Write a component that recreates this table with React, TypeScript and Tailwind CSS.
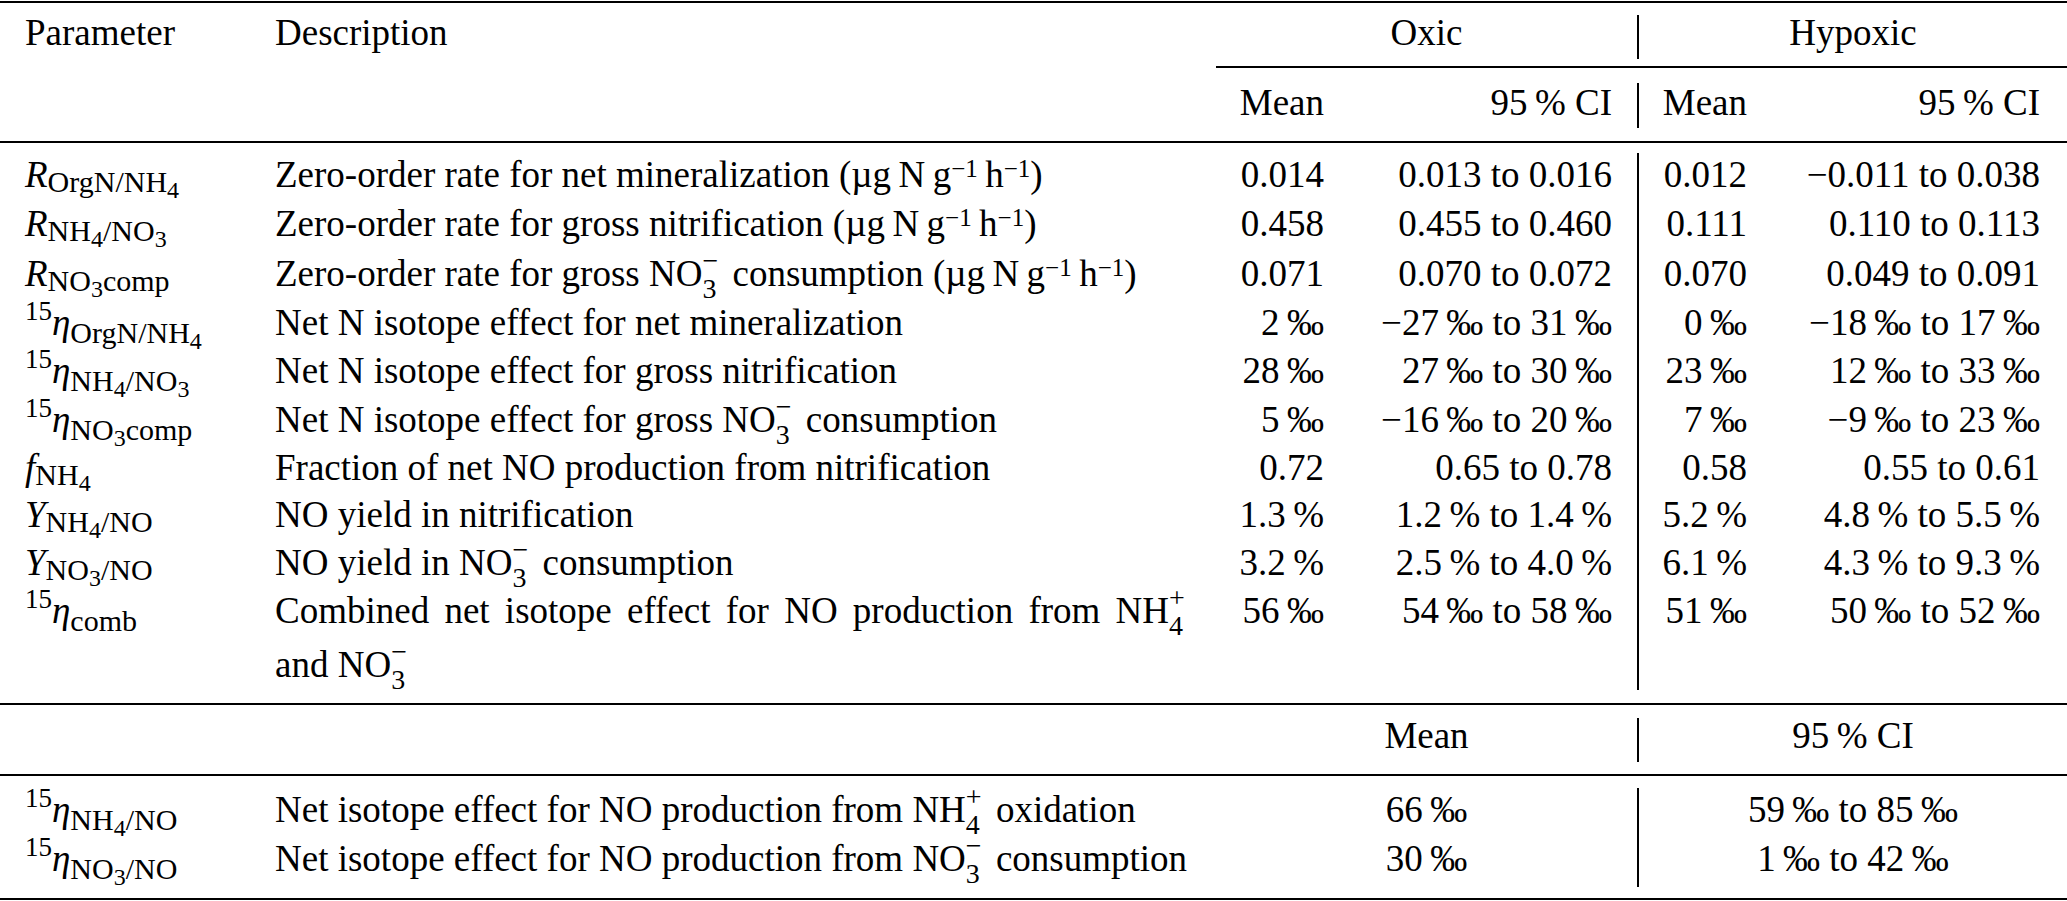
import type { ReactNode } from 'react';

const thin = '\u2009';

type Seg = [string, 1 | 2];

// parameter symbol: optional 15 superscript, italic base, nested roman subscripts
function Sym({ iso, base, sub, drop = 5 }: { iso?: boolean; base: string; sub: Seg[]; drop?: number }) {
  return (
    <span className="whitespace-nowrap">
      {iso && <span className="text-[27px] leading-[0] align-[15px]">15</span>}
      <i>{base}</i>
      {sub.map(([t, lvl], i) =>
        lvl === 1 ? (
          <span key={i} className={drop === 8 ? 'text-[30px] leading-[0] align-[-8px]' : 'text-[30px] leading-[0] align-[-5px]'}>
            {t}
          </span>
        ) : (
          <span key={i} className={drop === 8 ? 'text-[24px] leading-[0] align-[-14px]' : 'text-[24px] leading-[0] align-[-11px]'}>
            {t}
          </span>
        )
      )}
    </span>
  );
}

// ion with stacked subscript and charge, e.g. NO3-
function Ion({ base, sub, charge }: { base: string; sub: string; charge: string }) {
  return (
    <span className="whitespace-nowrap">
      {base}
      <span className="inline-block w-0 text-[28px] leading-[0] align-[-12px]">{sub}</span>
      <span className="pr-[5px] text-[28px] leading-[0] align-[16px]">{charge}</span>
    </span>
  );
}

function Exp({ children }: { children: ReactNode }) {
  return <span className="text-[25px] leading-[0] align-[10px]">{children}</span>;
}

const units = (
  <>
    (µg{thin}N{thin}g<Exp>−1</Exp>
    {thin}h<Exp>−1</Exp>)
  </>
);

const no3 = <Ion base="NO" sub="3" charge="−" />;
const nh4 = <Ion base="NH" sub="4" charge="+" />;
const pm = (n: string) => `${n}${thin}‰`;
const pc = (n: string) => `${n}${thin}%`;

const rows: { h: string; param: ReactNode; desc: ReactNode; v: string[] }[] = [
  {
    h: 'h-[49px]',
    param: <Sym base="R" sub={[['OrgN/NH', 1], ['4', 2]]} />,
    desc: <>Zero-order rate for net mineralization {units}</>,
    v: ['0.014', '0.013 to 0.016', '0.012', '−0.011 to 0.038'],
  },
  {
    h: 'h-[50px]',
    param: <Sym base="R" sub={[['NH', 1], ['4', 2], ['/NO', 1], ['3', 2]]} />,
    desc: <>Zero-order rate for gross nitrification {units}</>,
    v: ['0.458', '0.455 to 0.460', '0.111', '0.110 to 0.113'],
  },
  {
    h: 'h-[49px]',
    param: <Sym base="R" sub={[['NO', 1], ['3', 2], ['comp', 1]]} />,
    desc: <>Zero-order rate for gross {no3} consumption {units}</>,
    v: ['0.071', '0.070 to 0.072', '0.070', '0.049 to 0.091'],
  },
  {
    h: 'h-[48px]',
    param: <Sym iso base="η" drop={8} sub={[['OrgN/NH', 1], ['4', 2]]} />,
    desc: <>Net N isotope effect for net mineralization</>,
    v: [pm('2'), `−${pm('27')} to ${pm('31')}`, pm('0'), `−${pm('18')} to ${pm('17')}`],
  },
  {
    h: 'h-[49px]',
    param: <Sym iso base="η" drop={8} sub={[['NH', 1], ['4', 2], ['/NO', 1], ['3', 2]]} />,
    desc: <>Net N isotope effect for gross nitrification</>,
    v: [pm('28'), `${pm('27')} to ${pm('30')}`, pm('23'), `${pm('12')} to ${pm('33')}`],
  },
  {
    h: 'h-[48px]',
    param: <Sym iso base="η" drop={8} sub={[['NO', 1], ['3', 2], ['comp', 1]]} />,
    desc: <>Net N isotope effect for gross {no3} consumption</>,
    v: [pm('5'), `−${pm('16')} to ${pm('20')}`, pm('7'), `−${pm('9')} to ${pm('23')}`],
  },
  {
    h: 'h-[47px]',
    param: <Sym base="f" sub={[['NH', 1], ['4', 2]]} />,
    desc: <>Fraction of net NO production from nitrification</>,
    v: ['0.72', '0.65 to 0.78', '0.58', '0.55 to 0.61'],
  },
  {
    h: 'h-[48px]',
    param: <Sym base="Y" sub={[['NH', 1], ['4', 2], ['/NO', 1]]} />,
    desc: <>NO yield in nitrification</>,
    v: [pc('1.3'), `${pc('1.2')} to ${pc('1.4')}`, pc('5.2'), `${pc('4.8')} to ${pc('5.5')}`],
  },
  {
    h: 'h-[48px]',
    param: <Sym base="Y" sub={[['NO', 1], ['3', 2], ['/NO', 1]]} />,
    desc: <>NO yield in {no3} consumption</>,
    v: [pc('3.2'), `${pc('2.5')} to ${pc('4.0')}`, pc('6.1'), `${pc('4.3')} to ${pc('9.3')}`],
  },
  {
    h: 'h-[101px]',
    param: <Sym iso base="η" drop={8} sub={[['comb', 1]]} />,
    desc: (
      <>
        <div className="h-[54px] [word-spacing:6px]">Combined net isotope effect for NO production from {nh4}</div>
        <div>and {no3}</div>
      </>
    ),
    v: [pm('56'), `${pm('54')} to ${pm('58')}`, pm('51'), `${pm('50')} to ${pm('52')}`],
  },
];

const summary: { h: string; param: ReactNode; desc: ReactNode; mean: string; ci: string }[] = [
  {
    h: 'h-[49px]',
    param: <Sym iso base="η" drop={8} sub={[['NH', 1], ['4', 2], ['/NO', 1]]} />,
    desc: <>Net isotope effect for NO production from {nh4} oxidation</>,
    mean: pm('66'),
    ci: `${pm('59')} to ${pm('85')}`,
  },
  {
    h: 'h-[50px]',
    param: <Sym iso base="η" drop={8} sub={[['NO', 1], ['3', 2], ['/NO', 1]]} />,
    desc: <>Net isotope effect for NO production from {no3} consumption</>,
    mean: pm('30'),
    ci: `${pm('1')} to ${pm('42')}`,
  },
];

function Bar() {
  return <div className="w-[2px] shrink-0 bg-black" />;
}

function Rule({ from = 0 }: { from?: number }) {
  return (
    <div className="flex h-[2px] shrink-0">
      {from > 0 && <div className="w-[1216px] shrink-0" />}
      <div className="flex-1 bg-black" />
    </div>
  );
}

export default function App() {
  return (
    <div className="w-[2067px] h-[901px] overflow-hidden bg-white text-black font-[family-name:'Liberation_Serif','Times_New_Roman',serif] text-[37px] leading-[36px]">
      <div className="flex flex-col pt-[1px]">
        <Rule />

        {/* header: condition groups */}
        <div className="mt-[12px] flex h-[44px]">
          <div className="w-[275px] shrink-0 pl-[25px]">Parameter</div>
          <div className="w-[941px] shrink-0">Description</div>
          <div className="w-[421px] shrink-0 text-center">Oxic</div>
          <Bar />
          <div className="flex-1 text-center">Hypoxic</div>
        </div>
        <div className="mt-[7px]">
          <Rule from={1216} />
        </div>

        {/* header: statistics */}
        <div className="mt-[15px] flex h-[45px]">
          <div className="w-[1216px] shrink-0" />
          <div className="w-[108px] shrink-0 pt-[2px] text-right">Mean</div>
          <div className="w-[288px] shrink-0 pt-[2px] text-right">95{thin}% CI</div>
          <div className="w-[25px] shrink-0" />
          <Bar />
          <div className="w-[108px] shrink-0 pt-[2px] text-right">Mean</div>
          <div className="w-[293px] shrink-0 pt-[2px] text-right">95{thin}% CI</div>
        </div>
        <div className="mt-[13px]">
          <Rule />
        </div>

        {/* body */}
        <div className="mt-[10px] flex flex-col">
          {rows.map((r, i) => (
            <div key={i} className={`flex ${r.h}`}>
              <div className="w-[275px] shrink-0 pl-[25px] pt-[4px]">{r.param}</div>
              <div className="w-[941px] shrink-0 whitespace-nowrap pt-[4px]">{r.desc}</div>
              <div className="w-[108px] shrink-0 whitespace-nowrap pt-[4px] text-right">{r.v[0]}</div>
              <div className="w-[288px] shrink-0 whitespace-nowrap pt-[4px] text-right">{r.v[1]}</div>
              <div className="w-[25px] shrink-0" />
              <Bar />
              <div className="w-[108px] shrink-0 whitespace-nowrap pt-[4px] text-right">{r.v[2]}</div>
              <div className="w-[293px] shrink-0 whitespace-nowrap pt-[4px] text-right">{r.v[3]}</div>
            </div>
          ))}
        </div>
        <div className="mt-[13px]">
          <Rule />
        </div>

        {/* pooled estimates */}
        <div className="mt-[13px] flex h-[44px]">
          <div className="w-[1216px] shrink-0" />
          <div className="w-[421px] shrink-0 text-center">Mean</div>
          <Bar />
          <div className="flex-1 text-center">95{thin}% CI</div>
        </div>
        <div className="mt-[12px]">
          <Rule />
        </div>
        <div className="mt-[12px] flex flex-col">
          {summary.map((r, i) => (
            <div key={i} className={`flex ${r.h}`}>
              <div className="w-[275px] shrink-0 pl-[25px] pt-[4px]">{r.param}</div>
              <div className="w-[941px] shrink-0 whitespace-nowrap pt-[4px]">{r.desc}</div>
              <div className="w-[421px] shrink-0 whitespace-nowrap pt-[4px] text-center">{r.mean}</div>
              <Bar />
              <div className="flex-1 whitespace-nowrap pt-[4px] text-center">{r.ci}</div>
            </div>
          ))}
        </div>
        <div className="mt-[11px]">
          <Rule />
        </div>
      </div>
    </div>
  );
}
